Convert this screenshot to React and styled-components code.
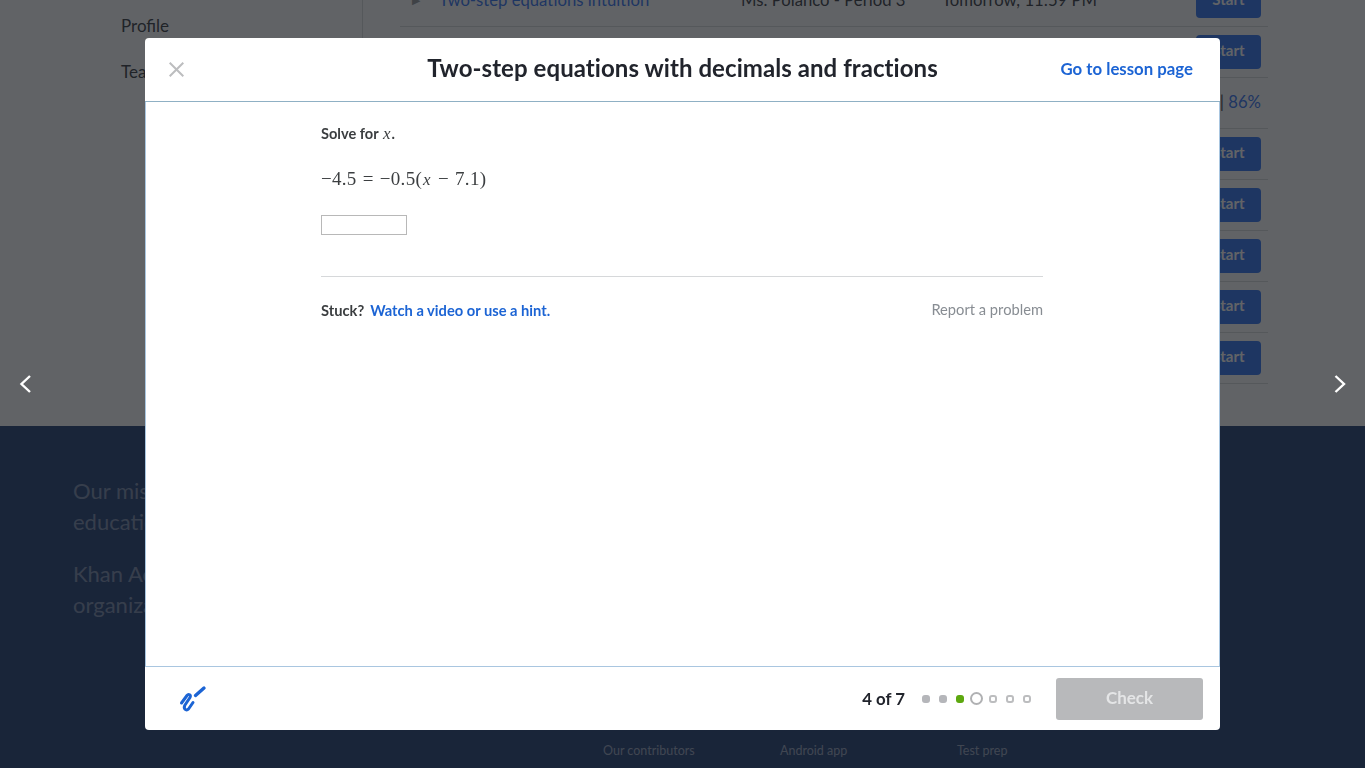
import React from "react";
import styled, { createGlobalStyle } from "styled-components";

const Global = createGlobalStyle`
  html, body { margin: 0; padding: 0; height: 768px; overflow: hidden; background: #fff; font-family: Lato, "Open Sans", sans-serif; color: #21242c; }
  * { box-sizing: border-box; }
`;

const Page = styled.div`
  width: 1365px;
  height: 768px;
  overflow: hidden;
  display: flex;
  flex-direction: column;
`;
const Main = styled.main`
  height: 426px;
  flex: none;
  overflow: hidden;
  display: flex;
  align-items: stretch;
  background: #fff;
`;
const Sidebar = styled.nav`
  width: 363px;
  height: 100%;
  flex: none;
  padding: 14px 0 0 121px;
  border-right: 1px solid #d6d8da;
  display: flex;
  flex-direction: column;
  gap: 22px;
`;
const SideLink = styled.a`
  font-size: 17px;
  line-height: 24px;
  color: #21242c;
`;
const Table = styled.section`
  width: 868px;
  margin: -24px 0 0 37px;
  display: flex;
  flex-direction: column;
`;
const Row = styled.div`
  height: 51px;
  flex: none;
  border-bottom: 1px solid #d6d8da;
  display: flex;
  align-items: center;
  font-size: 16.7px;
  color: #21242c;
`;
const Arrow = styled.span`
  width: 39px;
  padding-left: 12px;
  margin-bottom: 2px;
  flex: none;
  color: #8a8c90;
  font-size: 11px;
`;
const LessonLink = styled.a`
  width: 302px;
  margin-bottom: 2px;
  flex: none;
  color: #1865f2;
`;
const Teacher = styled.span`
  width: 201px;
  margin-bottom: 2px;
  flex: none;
`;
const Due = styled.span`
  flex: 1;
  margin-bottom: 2px;
`;
const StartButton = styled.button`
  width: 65px;
  height: 34px;
  margin-right: 7px;
  padding: 0 0 4px;
  border: 0;
  border-radius: 4px;
  background: #1865f2;
  color: #fff;
  font: 700 15px Lato, sans-serif;
`;
const Score = styled.span`
  margin: 0 7px 2px 0;
  color: #1865f2;
`;
const ScoreBar = styled.span`
  color: #21242c;
`;

const Footer = styled.footer`
  flex: 1;
  background: #0a2a66;
  padding: 49px 0 0 73px;
  color: rgba(255, 255, 255, 0.42);
`;
const Mission = styled.p`
  width: 470px;
  margin: 0 0 21px;
  font-size: 22px;
  line-height: 31px;
`;
const FooterLinks = styled.div`
  display: flex;
  margin: 123px 0 0 530px;
`;
const FooterLink = styled.a`
  width: 177px;
  font-size: 12.5px;
  line-height: 16px;
  color: rgba(255, 255, 255, 0.55);
`;

const Backdrop = styled.div`
  position: fixed;
  inset: 0;
  background: rgba(33, 35, 40, 0.71);
`;
const Chevron = styled.svg`
  position: absolute;
  top: 375px;
  left: ${(p) => p.$left}px;
`;
const Modal = styled.div`
  position: absolute;
  left: 145px;
  top: 38px;
  width: 1075px;
  height: 692px;
  background: #fff;
  border-radius: 4px;
  display: flex;
  flex-direction: column;
  overflow: hidden;
`;
const ModalHeader = styled.header`
  height: 64px;
  flex: none;
  display: flex;
  align-items: center;
  justify-content: space-between;
  padding: 0 27px 2px 24px;
  border-bottom: 1px solid #8fb0c4;
  position: relative;
`;
const CloseButton = styled.button`
  width: 15px;
  height: 15px;
  padding: 0;
  margin-top: 1px;
  border: 0;
  background: none;
  display: flex;
`;
const Title = styled.h1`
  position: absolute;
  left: 0;
  right: 0;
  margin: -2px 0 0;
  text-align: center;
  font-size: 24px;
  line-height: 30px;
  font-weight: 700;
  letter-spacing: 0.065px;
  color: #21242c;
  pointer-events: none;
`;
const LessonPage = styled.a`
  font-size: 16.8px;
  font-weight: 700;
  color: #1c64d4;
`;
const ModalBody = styled.div`
  flex: 1;
  border-left: 1px solid #a9c6e0;
  border-right: 1px solid #a9c6e0;
  border-bottom: 1px solid #a9c6e0;
  padding: 22px 176px 0 175px;
`;
const Prompt = styled.p`
  margin: 0;
  font-size: 14.6px;
  line-height: 20px;
  font-weight: 700;
  color: #3b3e40;
`;
const MathVar = styled.i`
  padding: 0 1px;
  font-family: "Liberation Serif", serif;
  font-weight: 400;
  font-size: 17px;
`;
const Equation = styled.p`
  margin: 23px 0 0;
  font-family: "Liberation Serif", serif;
  font-size: 19px;
  line-height: 24px;
  color: #3b3e40;
  letter-spacing: 0.3px;
  word-spacing: 1px;
`;
const Answer = styled.input`
  display: block;
  width: 86px;
  height: 20px;
  margin-top: 23px;
  border: 1px solid #b8b8b8;
  background: #fff;
  padding: 0;
`;
const Rule = styled.hr`
  margin: 41px 0 0;
  border: 0;
  border-top: 1px solid #d6d8da;
`;
const HelpRow = styled.div`
  margin-top: 22px;
  display: flex;
  justify-content: space-between;
  align-items: center;
  font-size: 14.7px;
  line-height: 20px;
`;
const Stuck = styled.span`
  font-weight: 700;
  color: #3b3e40;
`;
const HintLink = styled.a`
  margin-left: 6px;
  color: #1c64d4;
`;
const Report = styled.a`
  margin-bottom: 2px;
  font-weight: 400;
  color: #888d93;
`;
const ModalFooter = styled.div`
  height: 63px;
  flex: none;
  display: flex;
  align-items: center;
  padding: 0 17px 0 34px;
`;
const Counter = styled.span`
  margin-left: auto;
  font-size: 16.8px;
  font-weight: 700;
  color: #21242c;
`;
const Dots = styled.div`
  display: flex;
  align-items: center;
  gap: 7px;
  margin: 0 24px 0 16px;
`;
const Dot = styled.span`
  width: ${(p) => (p.$state === "current" ? 13 : 8)}px;
  height: ${(p) => (p.$state === "current" ? 13 : 8)}px;
  margin: 0 ${(p) => (p.$state === "current" ? -2 : 1)}px;
  border-radius: ${(p) => (p.$state === "current" ? "50%" : "3px")};
  background: ${(p) =>
    p.$state === "done" ? "#b5b6ba" : p.$state === "right" ? "#5da80f" : "#fff"};
  border: ${(p) =>
    p.$state === "current" ? "2px solid #b0b1b3" : p.$state === "todo" ? "2px solid #bcbdbf" : "0"};
`;
const CheckButton = styled.button`
  width: 147px;
  height: 42px;
  padding: 0 0 2px;
  border: 0;
  border-radius: 3px;
  background: #b8b9bb;
  color: #e4e5e6;
  font: 700 17px Lato, sans-serif;
`;

const rows = [
  { link: "Two-step equations intuition", teacher: "Ms. Polanco - Period 3", due: "Tomorrow, 11:59 PM" },
  { link: "Two-step equations", teacher: "Ms. Polanco - Period 3", due: "Tomorrow, 11:59 PM" },
  { link: "Two-step equations with decimals", teacher: "Ms. Polanco - Period 3", due: "Yesterday", score: "86%" },
  { link: "One-step inequalities", teacher: "Ms. Polanco - Period 3", due: "Tomorrow, 11:59 PM" },
  { link: "Two-step inequalities", teacher: "Ms. Polanco - Period 3", due: "Tomorrow, 11:59 PM" },
  { link: "Multi-step inequalities", teacher: "Ms. Polanco - Period 3", due: "Tomorrow, 11:59 PM" },
  { link: "Equations with variables", teacher: "Ms. Polanco - Period 3", due: "Tomorrow, 11:59 PM" },
  { link: "Systems of equations", teacher: "Ms. Polanco - Period 3", due: "Tomorrow, 11:59 PM" },
];
const steps = ["done", "done", "right", "current", "todo", "todo", "todo"];

export default function App() {
  return (
    <Page>
      <Global />
      <Main>
        <Sidebar>
          <SideLink>Profile</SideLink>
          <SideLink>Teachers</SideLink>
        </Sidebar>
        <Table>
          {rows.map((r) => (
            <Row key={r.link}>
              <Arrow>▶</Arrow>
              <LessonLink>{r.link}</LessonLink>
              <Teacher>{r.teacher}</Teacher>
              <Due>{r.due}</Due>
              {r.score ? (
                <Score>
                  <ScoreBar>| </ScoreBar>
                  {r.score}
                </Score>
              ) : (
                <StartButton>Start</StartButton>
              )}
            </Row>
          ))}
        </Table>
      </Main>
      <Footer>
        <Mission>Our mission is to provide a free, world-class education for anyone, anywhere.</Mission>
        <Mission>Khan Academy is a 501(c)(3) nonprofit organization.</Mission>
        <FooterLinks>
          <FooterLink>Our contributors</FooterLink>
          <FooterLink>Android app</FooterLink>
          <FooterLink>Test prep</FooterLink>
        </FooterLinks>
      </Footer>
      <Backdrop />
      <Chevron $left={18} width="14" height="18" viewBox="0 0 14 18" fill="none">
        <path d="M12 1 3.5 9 12 17" stroke="#fff" strokeWidth="2.4" />
      </Chevron>
      <Chevron $left={1333} width="14" height="18" viewBox="0 0 14 18" fill="none">
        <path d="M2.5 1 11 9 2.5 17" stroke="#fff" strokeWidth="2.4" />
      </Chevron>
      <Modal>
        <ModalHeader>
          <CloseButton aria-label="Close">
            <svg width="15" height="15" viewBox="0 0 15 15" fill="none">
              <path d="M.7.7 14.3 14.3M14.3.7.7 14.3" stroke="#bcbdbf" strokeWidth="2" />
            </svg>
          </CloseButton>
          <Title>Two-step equations with decimals and fractions</Title>
          <LessonPage>Go to lesson page</LessonPage>
        </ModalHeader>
        <ModalBody>
          <Prompt>
            Solve for <MathVar>x</MathVar>.
          </Prompt>
          <Equation>
            −4.5 = −0.5(<MathVar>x</MathVar> − 7.1)
          </Equation>
          <Answer aria-label="Answer" />
          <Rule />
          <HelpRow>
            <span>
              <Stuck>Stuck?</Stuck>
              <Stuck>
                <HintLink>Watch a video or use a hint.</HintLink>
              </Stuck>
            </span>
            <Report>Report a problem</Report>
          </HelpRow>
        </ModalBody>
        <ModalFooter>
          <svg width="28" height="28" viewBox="0 0 28 28" fill="none">
            <path d="M16.5 10.5 25 3" stroke="#1c64d4" strokeWidth="3.4" strokeLinecap="round" />
            <path
              d="M2.5 18 8 10.5C9.5 8.5 12.5 10 11 12.5L6 20C4 23.5 7 26.5 9.5 24L14 17.5"
              stroke="#1c64d4"
              strokeWidth="3"
              strokeLinecap="round"
              strokeLinejoin="round"
            />
          </svg>
          <Counter>4 of 7</Counter>
          <Dots>
            {steps.map((s, i) => (
              <Dot key={i} $state={s} />
            ))}
          </Dots>
          <CheckButton>Check</CheckButton>
        </ModalFooter>
      </Modal>
    </Page>
  );
}
